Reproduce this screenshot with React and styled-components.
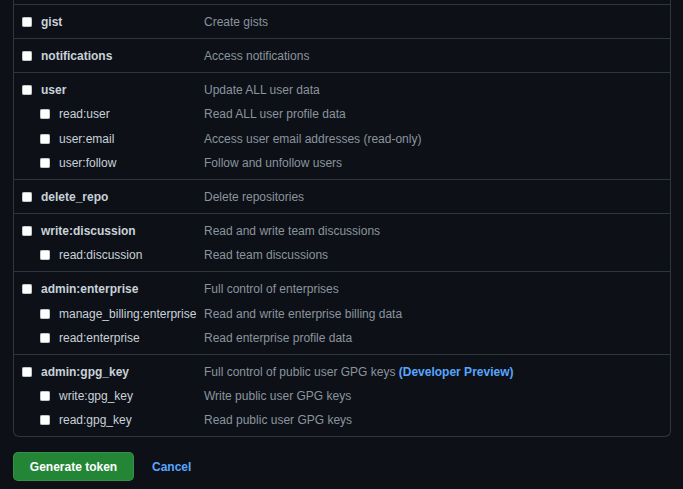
import styled, { createGlobalStyle } from "styled-components";

const GlobalStyle = createGlobalStyle`
  html, body {
    margin: 0;
    background: #0d1117;
  }
  body {
    font-family: "Liberation Sans", Arial, sans-serif;
    font-size: 12px;
    color: #c9d1d9;
    overflow: hidden;
  }
`;

const Page = styled.div`
  padding: 0 12px 0 13px;
`;

// the list continues above the visible area, so only the sides and bottom show
const ScopeBox = styled.div`
  padding-top: 4px;
  border: 1px solid #30363d;
  border-top: none;
  border-radius: 0 0 6px 6px;
`;

const Group = styled.div`
  padding: 5px 8px 3.7px;
  border-top: 1px solid #30363d;
`;

const Line = styled.label`
  display: grid;
  grid-template-columns: 182px 1fr;
  align-items: center;
  height: 24.3px;
`;

const Name = styled.span`
  display: flex;
  align-items: center;
  padding-left: ${p => (p.$sub ? "18px" : "0")};
  font-weight: ${p => (p.$sub ? 400 : 700)};
  white-space: nowrap;
  color: #c9d1d9;
`;

const Check = styled.span`
  width: 10px;
  height: 10px;
  flex: none;
  margin-right: 9px;
  background: #ffffff;
  border-radius: 2px;
  box-shadow: inset 0 0 0 0.5px #8b949e;
`;

const Desc = styled.span`
  color: #8b949e;
  white-space: nowrap;
`;

const Preview = styled.span`
  color: #58a6ff;
  font-weight: 700;
`;

const Actions = styled.div`
  display: flex;
  align-items: center;
  gap: 18px;
  margin-top: 15px;
`;

const Button = styled.button`
  height: 29px;
  width: 121px;
  padding: 0;
  border: 1px solid rgba(240, 246, 252, 0.1);
  border-radius: 5px;
  background: #238636;
  color: #ffffff;
  font-family: inherit;
  font-size: 12px;
  font-weight: 700;
`;

const Cancel = styled.a`
  color: #58a6ff;
  font-weight: 700;
  text-decoration: none;
`;

const scopes = [
  { name: "gist", desc: "Create gists" },
  { name: "notifications", desc: "Access notifications" },
  {
    name: "user",
    desc: "Update ALL user data",
    subs: [
      ["read:user", "Read ALL user profile data"],
      ["user:email", "Access user email addresses (read-only)"],
      ["user:follow", "Follow and unfollow users"],
    ],
  },
  { name: "delete_repo", desc: "Delete repositories" },
  {
    name: "write:discussion",
    desc: "Read and write team discussions",
    subs: [["read:discussion", "Read team discussions"]],
  },
  {
    name: "admin:enterprise",
    desc: "Full control of enterprises",
    subs: [
      ["manage_billing:enterprise", "Read and write enterprise billing data"],
      ["read:enterprise", "Read enterprise profile data"],
    ],
  },
  {
    name: "admin:gpg_key",
    desc: "Full control of public user GPG keys",
    preview: true,
    subs: [
      ["write:gpg_key", "Write public user GPG keys"],
      ["read:gpg_key", "Read public user GPG keys"],
    ],
  },
];

export default function App() {
  return (
    <Page>
      <GlobalStyle />
      <ScopeBox>
        {scopes.map(scope => (
          <Group key={scope.name}>
            <Line>
              <Name>
                <Check />
                {scope.name}
              </Name>
              <Desc>
                {scope.desc}
                {scope.preview && (
                  <>
                    {" "}
                    <Preview>(Developer Preview)</Preview>
                  </>
                )}
              </Desc>
            </Line>
            {(scope.subs || []).map(([name, desc]) => (
              <Line key={name}>
                <Name $sub>
                  <Check />
                  {name}
                </Name>
                <Desc>{desc}</Desc>
              </Line>
            ))}
          </Group>
        ))}
      </ScopeBox>
      <Actions>
        <Button>Generate token</Button>
        <Cancel href="#">Cancel</Cancel>
      </Actions>
    </Page>
  );
}
